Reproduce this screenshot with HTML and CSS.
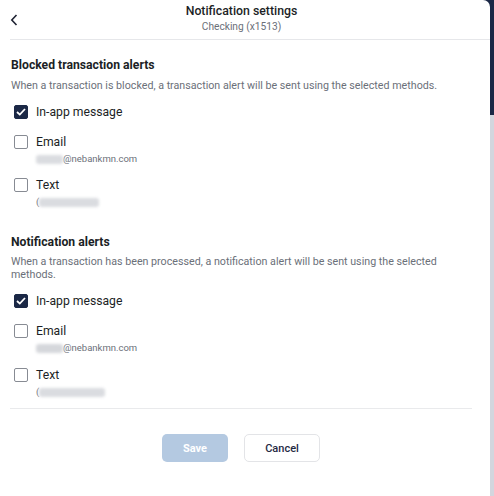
FILE: index.html
```html
<!DOCTYPE html>
<html>
<head>
<meta charset="utf-8">
<link rel="stylesheet" href="styles.css">
</head>
<body>
<div class="frame">
  <div class="panel">
    <header class="header">
      <button class="back" aria-label="Back">
        <svg width="10" height="12" viewBox="0 0 10 12"><path d="M6.5 1 L1.8 6 L6.5 11" fill="none" stroke="#1f2433" stroke-width="1.6"/></svg>
      </button>
      <div class="title">Notification settings</div>
      <div class="subtitle">Checking (x1513)</div>
    </header>

    <section class="section first">
      <h2 class="heading">Blocked transaction alerts</h2>
      <p class="desc">When a transaction is blocked, a transaction alert will be sent using the selected methods.</p>
      <div class="option">
        <span class="box checked"><svg width="10" height="8" viewBox="0 0 10 8"><path d="M1 4 L3.8 6.6 L9 1" fill="none" stroke="#fff" stroke-width="1.8"/></svg></span>
        <span class="label">In-app message</span>
      </div>
      <div class="option">
        <span class="box"></span>
        <div>
          <span class="label">Email</span>
          <div class="detail"><span class="blur w27"></span>@nebankmn.com</div>
        </div>
      </div>
      <div class="option">
        <span class="box"></span>
        <div>
          <span class="label">Text</span>
          <div class="detail">(<span class="blur w60"></span></div>
        </div>
      </div>
    </section>

    <section class="section second">
      <h2 class="heading">Notification alerts</h2>
      <p class="desc">When a transaction has been processed, a notification alert will be sent using the selected methods.</p>
      <div class="option">
        <span class="box checked"><svg width="10" height="8" viewBox="0 0 10 8"><path d="M1 4 L3.8 6.6 L9 1" fill="none" stroke="#fff" stroke-width="1.8"/></svg></span>
        <span class="label">In-app message</span>
      </div>
      <div class="option">
        <span class="box"></span>
        <div>
          <span class="label">Email</span>
          <div class="detail"><span class="blur w27 faint"></span>@nebankmn.com</div>
        </div>
      </div>
      <div class="option">
        <span class="box"></span>
        <div>
          <span class="label">Text</span>
          <div class="detail">(<span class="blur w66"></span></div>
        </div>
      </div>
    </section>

    <div class="actions">
      <button class="btn save">Save</button>
      <button class="btn cancel">Cancel</button>
    </div>
  </div>
  <div class="track"></div>
</div>
</body>
</html>
```

FILE: styles.css
```css
* { box-sizing: border-box; }
html, body { margin: 0; height: 100%; }
body {
  font-family: Roboto, "Liberation Sans", sans-serif;
  color: #1c1f26;
}
.frame {
  display: flex;
  height: 496px;
  background: linear-gradient(to bottom, #1b2846 0, #1b2846 115px, #d3d6de 115px);
}
.panel {
  flex: 1;
  background: #fff;
  border-top-right-radius: 7px;
  padding: 0 0 0 10px;
}
.track { width: 4px; }
.header {
  position: relative;
  text-align: center;
  border-bottom: 1px solid #e6e7ea;
  height: 40px;
  padding-top: 3px;
  padding-right: 17px;
}
.back {
  position: absolute;
  left: 0;
  top: 14px;
  border: 0;
  background: none;
  padding: 0;
  width: 10px;
  height: 12px;
}
.back svg { display: block; }
.title {
  font-size: 12.3px;
  font-weight: 500;
  line-height: 16px;
  color: #1c1f26;
}
.subtitle {
  font-size: 10.2px;
  line-height: 15px;
  color: #6b7079;
}
.section { padding: 0 1px; margin-right: 18px; }
.section.first { padding-top: 17px; }
.section.second { padding-top: 19px; }
.heading {
  margin: 0;
  font-size: 12.2px;
  font-weight: 700;
  line-height: 16px;
}
.desc {
  margin: 6px 0 7px;
  font-size: 10.7px;
  line-height: 13px;
  color: #6b7079;
}
.second .desc { margin: 5px 0 7px; }
.option {
  display: flex;
  align-items: flex-start;
  gap: 8px;
  padding: 4px 0 7px 3px;
}
.second .option:nth-of-type(2) { padding-bottom: 8px; }
.box {
  width: 14px;
  height: 14px;
  border: 1.3px solid #878b93;
  border-radius: 2px;
  margin-top: 2px;
  display: flex;
  align-items: center;
  justify-content: center;
  flex: none;
}
.box.checked { background: #1b2846; border-color: #1b2846; }
.label {
  display: block;
  font-size: 12.2px;
  line-height: 19px;
  color: #1c1f26;
}
.detail {
  font-size: 9.5px;
  line-height: 12px;
  margin-top: 1px;
  color: #6b7079;
  display: flex;
  align-items: center;
}
.blur {
  display: inline-block;
  height: 9px;
  background: #dadce0;
  filter: blur(1.5px);
  border-radius: 3px;
}
.blur.faint { background: #d5d7db; }
.w27 { width: 27px; }
.w60 { width: 60px; }
.w66 { width: 66px; }
.actions {
  border-top: 1px solid #e9eaec;
  margin-right: 18px;
  margin-top: 3px;
  display: flex;
  justify-content: center;
  gap: 16px;
  padding-top: 25px;
}
.btn {
  height: 28px;
  border-radius: 5px;
  font-family: Roboto, "Liberation Sans", sans-serif;
  font-size: 11px;
  font-weight: 500;
}
.save {
  width: 66px;
  background: #b4c9e1;
  border: 0;
  color: #fff;
  font-weight: 700;
}
.cancel {
  width: 76px;
  background: #fff;
  border: 1px solid #e3e4e7;
  color: #1f2a44;
}
```
